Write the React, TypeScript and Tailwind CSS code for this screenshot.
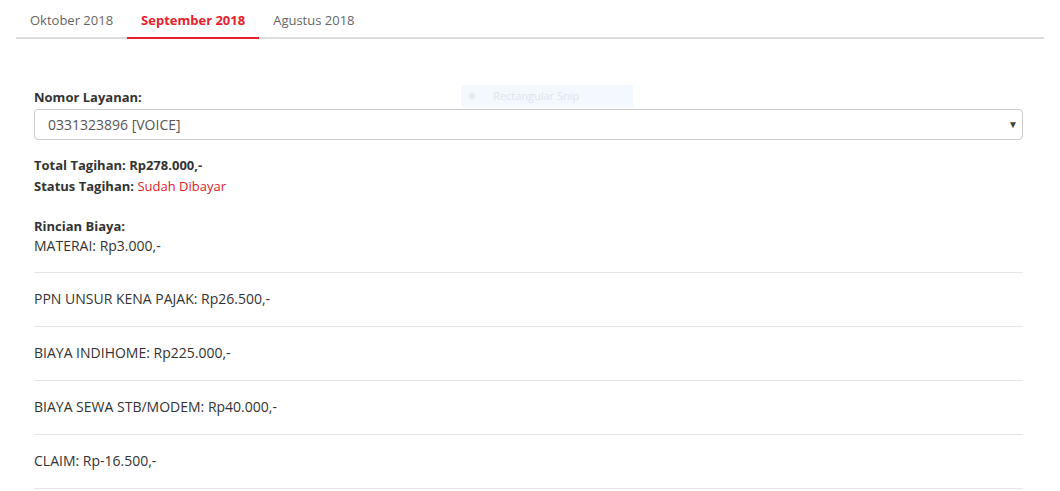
import React from 'react';

const items = [
  'MATERAI: Rp3.000,-',
  'PPN UNSUR KENA PAJAK: Rp26.500,-',
  'BIAYA INDIHOME: Rp225.000,-',
  'BIAYA SEWA STB/MODEM: Rp40.000,-',
  'CLAIM: Rp-16.500,-',
];

const App: React.FC = () => {
  const tabs = ['Oktober 2018', 'September 2018', 'Agustus 2018'];

  return (
    <div className="relative min-h-[491px] bg-white text-[13px] text-[#333] font-['Open_Sans',sans-serif]">
      {/* Tabs */}
      <div className="mx-4 flex border-b-2 border-[#dddddd]">
        {tabs.map((t, i) => (
          <div
            key={t}
            className={`-mb-[2px] px-[14px] pt-[11px] pb-[8px] leading-[18px] ${
              i === 1 ? 'border-b-2 border-[#e4212b] font-bold text-[#e4212b]' : 'border-b-2 border-transparent text-[#666]'
            }`}
          >
            {t}
          </div>
        ))}
      </div>

      <div className="pl-[34px] pr-[37px] pt-[48px]">
        <div className="font-bold leading-5">Nomor Layanan:</div>
        <div className="mt-[2px] flex h-[31px] items-center justify-between rounded-[4px] border border-[#cccccc] pl-[13px] pr-[4px] text-[14px] text-[#555]">
          <span>0331323896 [VOICE]</span>
          <span className="text-[10px] text-[#444]">▼</span>
        </div>

        <div className="mt-[15px] leading-[21px]">
          <div className="font-bold">Total Tagihan: Rp278.000,-</div>
          <div>
            <span className="font-bold">Status Tagihan: </span>
            <span className="text-[#e4212b]">Sudah Dibayar</span>
          </div>
        </div>

        <div className="mt-[19px] font-bold leading-5">Rincian Biaya:</div>
        <div className="text-[14px]">
          {items.map((it, i) => (
            <div key={it} className={`border-b border-[#e5e5e5] leading-5 ${i === 0 ? 'pb-[16px]' : 'pt-[16px] pb-[17px]'}`}>
              {it}
            </div>
          ))}
        </div>
      </div>

      {/* Snip overlay */}
      <div className="absolute left-[461px] top-[85px] flex h-[22px] w-[172px] items-center gap-[18px] bg-[#f3f9ff] pl-[8px] text-[11px] text-[#dde6ee]">
        <span className="h-[6px] w-[6px] rounded-full bg-[#e3eaf2]" />
        <span>Rectangular Snip</span>
      </div>
    </div>
  );
};

export default App;
